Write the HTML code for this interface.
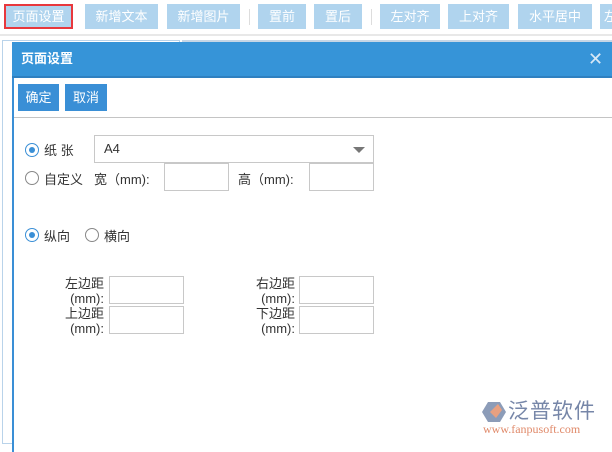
<!DOCTYPE html><html><head><meta charset="utf-8"><style>
*{margin:0;padding:0;box-sizing:border-box}
body{width:612px;height:444px;overflow:hidden;background:#fff;font-family:"Liberation Sans","Noto Sans CJK SC",sans-serif;font-size:13px;color:#333;position:relative}
.a{position:absolute}
.tb{top:4px;height:25px;background:#b0d4ee;color:#fff;font-size:13px;line-height:25px;text-align:center}
.sep{top:9px;width:1px;height:16px;background:#ddd}
.inp{position:absolute;border:1px solid #c8c8c8;background:#fff}
.rad{position:absolute;width:14px;height:14px;border:1px solid #888;border-radius:50%;background:#fff}
.rad.on{border-color:#3a8fd6}
.rad.on::after{content:"";position:absolute;left:3px;top:3px;width:6px;height:6px;border-radius:50%;background:#3a8fd6}
.t{position:absolute;font-size:13px;color:#333;white-space:nowrap}
.btn{position:absolute;top:84px;height:27px;background:#3a8fd6;color:#fff;line-height:27px;text-align:center;font-size:13px}
</style></head><body>
<div class="a tb" style="left:4px;width:69px;border:2px solid #e8383d;line-height:21px">页面设置</div>
<div class="a tb" style="left:85px;width:73px">新增文本</div>
<div class="a tb" style="left:167px;width:73px">新增图片</div>
<div class="a sep" style="left:249px"></div>
<div class="a tb" style="left:258px;width:48px">置前</div>
<div class="a tb" style="left:314px;width:48px">置后</div>
<div class="a sep" style="left:371px"></div>
<div class="a tb" style="left:380px;width:60px">左对齐</div>
<div class="a tb" style="left:448px;width:61px">上对齐</div>
<div class="a tb" style="left:518px;width:74px">水平居中</div>
<div class="a tb" style="left:600px;width:60px;text-align:left;padding-left:4px">左</div>
<div class="a" style="left:0;top:34px;width:612px;height:2px;background:#e8e8e8"></div>
<div class="a" style="left:2px;top:40px;width:178px;height:404px;border:1px solid #b9d3ea"></div>
<div class="a" style="left:182px;top:40px;width:440px;height:2px;background:#c6d6e6"></div>
<div class="a" style="left:12px;top:42px;width:610px;height:410px;background:#fff;border-left:2px solid #3a8fd6"></div>
<div class="a" style="left:12px;top:42px;width:610px;height:36px;background:#3694d8;border-bottom:2px solid #2f80c0;color:#fff;font-weight:bold;font-size:13px;line-height:34px;padding-left:9px">页面设置</div>
<div class="a" style="left:588px;top:50px;color:#d8e8f6;font-size:18px;line-height:18px">✕</div>
<div class="btn" style="left:18px;width:41px">确定</div>
<div class="btn" style="left:65px;width:42px">取消</div>
<div class="a" style="left:14px;top:117px;width:600px;height:1px;background:#c4c4c4"></div>
<div class="rad on" style="left:25px;top:143px"></div><div class="t" style="left:44px;top:140px">纸 张</div>
<div class="inp" style="left:94px;top:135px;width:280px;height:28px"><span class="t" style="left:9px;top:5px">A4</span><span style="position:absolute;right:8px;top:11px;border-left:6px solid transparent;border-right:6px solid transparent;border-top:6px solid #777"></span></div>
<div class="rad" style="left:25px;top:171px"></div><div class="t" style="left:44px;top:169px">自定义</div>
<div class="t" style="left:94px;top:169px">宽（mm):</div>
<div class="inp" style="left:164px;top:163px;width:65px;height:28px"></div>
<div class="t" style="left:238px;top:169px">高（mm):</div>
<div class="inp" style="left:309px;top:163px;width:65px;height:28px"></div>
<div class="rad on" style="left:25px;top:228px"></div><div class="t" style="left:44px;top:226px">纵向</div>
<div class="rad" style="left:85px;top:228px"></div><div class="t" style="left:104px;top:226px">横向</div>
<div class="t" style="left:54px;top:276px;text-align:right;width:50px;line-height:15px">左边距<br>(mm):</div>
<div class="inp" style="left:109px;top:276px;width:75px;height:28px"></div>
<div class="t" style="left:54px;top:306px;text-align:right;width:50px;line-height:15px">上边距<br>(mm):</div>
<div class="inp" style="left:109px;top:306px;width:75px;height:28px"></div>
<div class="t" style="left:244px;top:276px;text-align:right;width:51px;line-height:15px">右边距<br>(mm):</div>
<div class="inp" style="left:299px;top:276px;width:75px;height:28px"></div>
<div class="t" style="left:244px;top:306px;text-align:right;width:51px;line-height:15px">下边距<br>(mm):</div>
<div class="inp" style="left:299px;top:306px;width:75px;height:28px"></div>
<svg class="a" style="left:482px;top:400px" width="24" height="22"><path d="M6 2h12l6 10-6 10H6L0 12z" fill="#8c9cb8"/><path d="M8 12l8-8 4 6-6 8z" fill="#e8a080"/></svg>
<div class="t" style="left:508px;top:395px;font-size:21px;color:#7686a8;letter-spacing:1px">泛普软件</div>
<div class="t" style="left:483px;top:422px;font-family:'Liberation Serif',serif;font-size:12px;color:#e08a6a">www.fanpusoft.com</div>
</body></html>
